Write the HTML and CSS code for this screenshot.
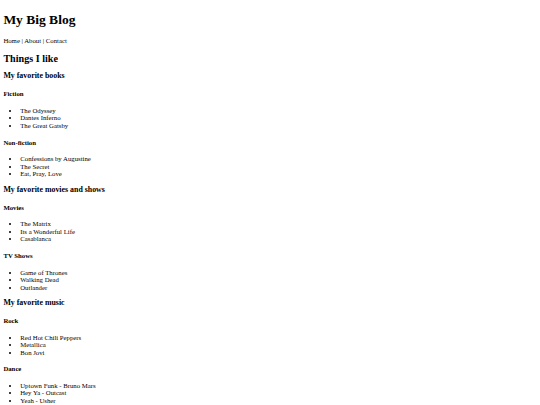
FILE: index.html
```html
<!DOCTYPE html>
<html>
<head>
<meta charset="utf-8">
<title>My Big Blog</title>
<link rel="stylesheet" href="styles.css">
</head>
<body class="page">
<h1 class="title">My Big Blog</h1>
<nav class="nav">Home | About | Contact</nav>
<h2 class="h2">Things I like</h2>
<h3 class="h3">My favorite books</h3>
<h4 class="h4">Fiction</h4>
<ul class="list">
<li>The Odyssey</li>
<li>Dantes Inferno</li>
<li>The Great Gatsby</li>
</ul>
<h4 class="h4">Non-fiction</h4>
<ul class="list">
<li>Confessions by Augustine</li>
<li>The Secret</li>
<li>Eat, Pray, Love</li>
</ul>
<h3 class="h3">My favorite movies and shows</h3>
<h4 class="h4">Movies</h4>
<ul class="list">
<li>The Matrix</li>
<li>Its a Wonderful Life</li>
<li>Casablanca</li>
</ul>
<h4 class="h4">TV Shows</h4>
<ul class="list">
<li>Game of Thrones</li>
<li>Walking Dead</li>
<li>Outlander</li>
</ul>
<h3 class="h3">My favorite music</h3>
<h4 class="h4">Rock</h4>
<ul class="list">
<li>Red Hot Chili Peppers</li>
<li>Metallica</li>
<li>Bon Jovi</li>
</ul>
<h4 class="h4">Dance</h4>
<ul class="list">
<li>Uptown Funk - Bruno Mars</li>
<li>Hey Ya - Outcast</li>
<li>Yeah - Usher</li>
</ul>
</body>
</html>
```
FILE: styles.css
```css
html { background: #fff; }
.page {
  margin: 0.5em;
  font-family: "Liberation Serif", "Times New Roman", serif;
  font-size: 6.75px;
  line-height: 1.125;
  color: #000;
}
.title { font-size: 2em; margin: 0.67em 0; font-weight: bold; }
.nav { display: block; }
.h2 { font-size: 1.5em; margin: 0.83em 0; font-weight: bold; }
.h3 { font-size: 1.17em; margin: 1em 0; font-weight: bold; }
.h4 { font-size: 1em; margin: 1.33em 0; font-weight: bold; }
.list { margin: 1em 0; padding-left: 2.5em; list-style: disc; }
```
